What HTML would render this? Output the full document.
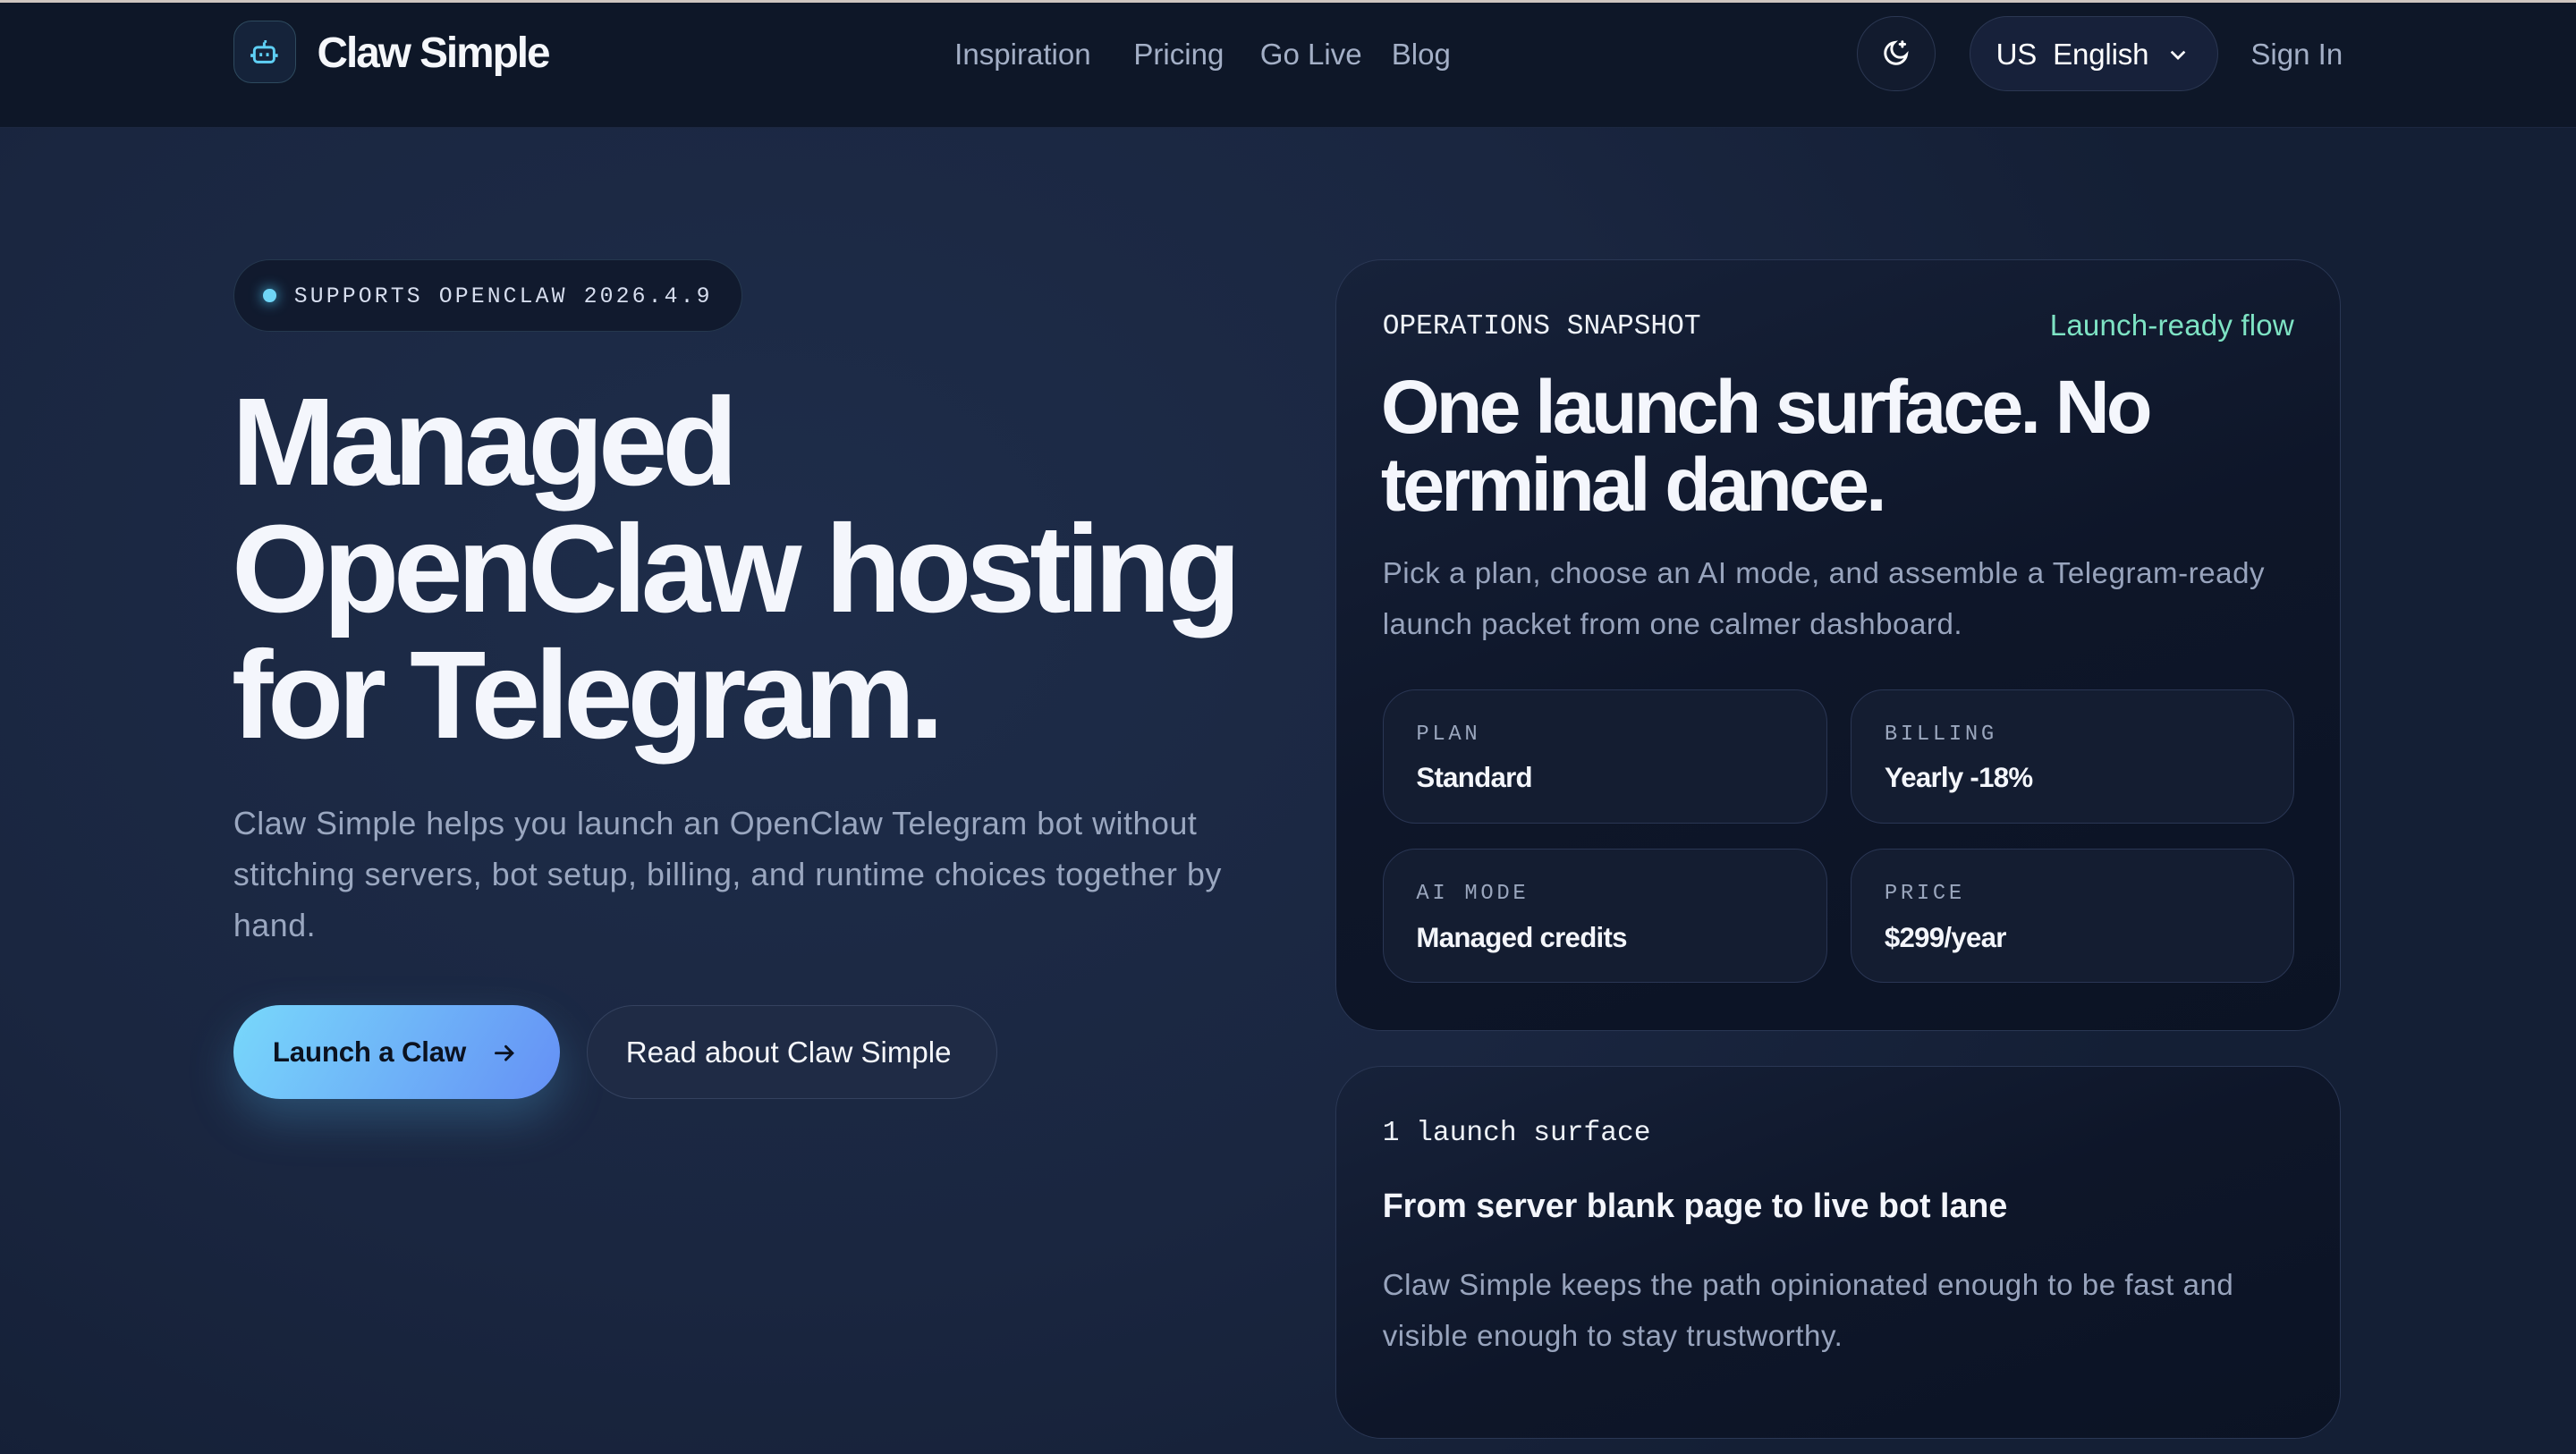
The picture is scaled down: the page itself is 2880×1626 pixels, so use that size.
<!DOCTYPE html>
<html><head><meta charset="utf-8"><style>
*{box-sizing:border-box;margin:0;padding:0}
html,body{width:2880px;height:1626px;overflow:hidden;background:#1b2843}
#r{width:1568px;height:885px;zoom:1.83674;position:relative;font-family:"Liberation Sans",sans-serif;overflow:hidden;
background:radial-gradient(ellipse 900px 700px at 30% 40%,#1e2d4a,#1a2640 60%,#141f35 100%)}
.a{position:absolute;white-space:nowrap}
.nav{position:absolute;left:0;top:0;width:1568px;height:78px;background:#0e1728;border-top:2px solid #cfc6c0;border-bottom:1px solid #1c2740}
.mono{font-family:"Liberation Mono",monospace}
.card{position:absolute;border:1px solid #2a3754;border-radius:28px;background:linear-gradient(160deg,#17223a,#0e1629 50%,#0b1324)}
.box{position:absolute;border:1px solid #2a3654;border-radius:20px;background:#141d31}
.lbl{position:absolute;left:20px;top:20px;font-family:"Liberation Mono",monospace;font-size:13px;letter-spacing:2px;color:#9aa6bd}
.val{position:absolute;left:20px;top:44px;font-size:17px;font-weight:bold;color:#f4f6fb;letter-spacing:-.4px}
.nl{position:absolute;white-space:nowrap;top:22px;font-size:18px;color:#a3afc6}
</style></head><body><div id="r">
<div class="nav">
 <div class="a" style="left:142px;top:11px;width:38px;height:38px;border:1px solid #2e4a5e;border-radius:11px;background:#15233a"></div>
 <svg class="a" style="left:151px;top:20px" width="20" height="20" viewBox="0 0 20 20" fill="none" stroke="#5fd0f5" stroke-width="1.6"><rect x="4" y="7" width="12" height="9" rx="2"/><path d="M10 7V4M10 3.5h1.5M8 10.5v2M12 10.5v2M2.5 11v2M17.5 11v2"/></svg>
 <div class="a" style="left:193px;top:16px;font-size:26px;font-weight:bold;color:#f5f7fb;letter-spacing:-1.1px">Claw Simple</div>
 <div class="nl" style="left:581px">Inspiration</div>
 <div class="nl" style="left:690px">Pricing</div>
 <div class="nl" style="left:767px">Go Live</div>
 <div class="nl" style="left:847px">Blog</div>
 <div class="a" style="left:1130px;top:8px;width:48px;height:46px;border:1px solid #2b3752;border-radius:24px;background:#121b2e"></div>
 <svg class="a" style="left:1145px;top:22px" width="18" height="18" viewBox="0 0 18 18" fill="none" stroke="#fff" stroke-width="1.6" stroke-linecap="round"><path d="M8 2.5A6.5 6.5 0 1 0 15.5 10 5 5 0 0 1 8 2.5z"/><path d="M13 2v3M11.5 3.5h3"/></svg>
 <div class="a" style="left:1199px;top:8px;width:151px;height:46px;border:1px solid #2b3752;border-radius:23px;background:#17213a"></div>
 <div class="a" style="left:1215px;top:22px;font-size:18px;color:#fff;letter-spacing:-.1px">US&nbsp; English</div>
 <svg class="a" style="left:1320px;top:28px" width="12" height="8" viewBox="0 0 12 8" fill="none" stroke="#fff" stroke-width="1.5"><path d="M2 2l4 4 4-4"/></svg>
 <div class="nl" style="left:1370px">Sign In</div>
</div>

<div class="a" style="left:142px;top:158px;width:310px;height:44px;border:1px solid #25384e;border-radius:22px;background:#111a2e"></div>
<div class="a" style="left:160px;top:176px;width:8px;height:8px;border-radius:50%;background:#6fd6f7;box-shadow:0 0 8px #4cc4ee"></div>
<div class="a mono" style="left:179px;top:173px;font-size:13.5px;letter-spacing:1.7px;color:#d6ddee">SUPPORTS OPENCLAW 2026.4.9</div>

<div class="a" style="left:141px;top:231px;font-size:76px;line-height:77px;font-weight:bold;color:#f4f6fc;letter-spacing:-3.5px">Managed<br>OpenClaw hosting<br>for Telegram.</div>

<div class="a" style="left:142px;top:486px;font-size:19.5px;line-height:31px;color:#9aa7c0;letter-spacing:.3px">Claw Simple helps you launch an OpenClaw Telegram bot without<br>stitching servers, bot setup, billing, and runtime choices together by<br>hand.</div>

<div class="a" style="left:142px;top:612px;width:199px;height:57px;border-radius:29px;background:linear-gradient(120deg,#78d8fb,#6590f5);box-shadow:0 12px 28px rgba(80,170,220,.3)"></div>
<div class="a" style="left:166px;top:631px;font-size:17px;font-weight:bold;color:#0b1220;letter-spacing:-.1px">Launch a Claw</div>
<svg class="a" style="left:299px;top:633px" width="16" height="16" viewBox="0 0 16 16" fill="none" stroke="#0b1220" stroke-width="1.6" stroke-linecap="round"><path d="M3 8h10M9 4l4 4-4 4"/></svg>
<div class="a" style="left:357px;top:612px;width:250px;height:57px;border:1px solid #34425f;border-radius:29px;background:#1f2b45"></div>
<div class="a" style="left:381px;top:631px;font-size:18px;color:#f5f7fb;letter-spacing:0">Read about Claw Simple</div>

<div class="card" style="left:813px;top:158px;width:612px;height:470px">
 <div class="a mono" style="left:28px;top:31px;font-size:17px;color:#eef2f8">OPERATIONS SNAPSHOT</div>
 <div class="a" style="right:28px;top:30px;font-size:18px;color:#7ee3c4;letter-spacing:.1px">Launch-ready flow</div>
 <div class="a" style="left:27px;top:66px;font-size:46px;line-height:47px;font-weight:bold;color:#f4f6fc;letter-spacing:-2.1px">One launch surface. No<br>terminal dance.</div>
 <div class="a" style="left:28px;top:176px;font-size:18px;line-height:31px;color:#98a4bd;letter-spacing:.3px">Pick a plan, choose an AI mode, and assemble a Telegram-ready<br>launch packet from one calmer dashboard.</div>
 <div class="box" style="left:28px;top:261px;width:271px;height:82px"><div class="lbl">PLAN</div><div class="val">Standard</div></div>
 <div class="box" style="left:313px;top:261px;width:270px;height:82px"><div class="lbl">BILLING</div><div class="val">Yearly -18%</div></div>
 <div class="box" style="left:28px;top:358px;width:271px;height:82px"><div class="lbl">AI MODE</div><div class="val">Managed credits</div></div>
 <div class="box" style="left:313px;top:358px;width:270px;height:82px"><div class="lbl">PRICE</div><div class="val">$299/year</div></div>
</div>

<div class="card" style="left:813px;top:649px;width:612px;height:227px">
 <div class="a mono" style="left:28px;top:31px;font-size:17px;color:#eef2f8">1 launch surface</div>
 <div class="a" style="left:28px;top:73px;font-size:20.5px;font-weight:bold;color:#f4f6fc;letter-spacing:0">From server blank page to live bot lane</div>
 <div class="a" style="left:28px;top:118px;font-size:18px;line-height:31px;color:#98a4bd;letter-spacing:.3px">Claw Simple keeps the path opinionated enough to be fast and<br>visible enough to stay trustworthy.</div>
</div>
</div></body></html>
